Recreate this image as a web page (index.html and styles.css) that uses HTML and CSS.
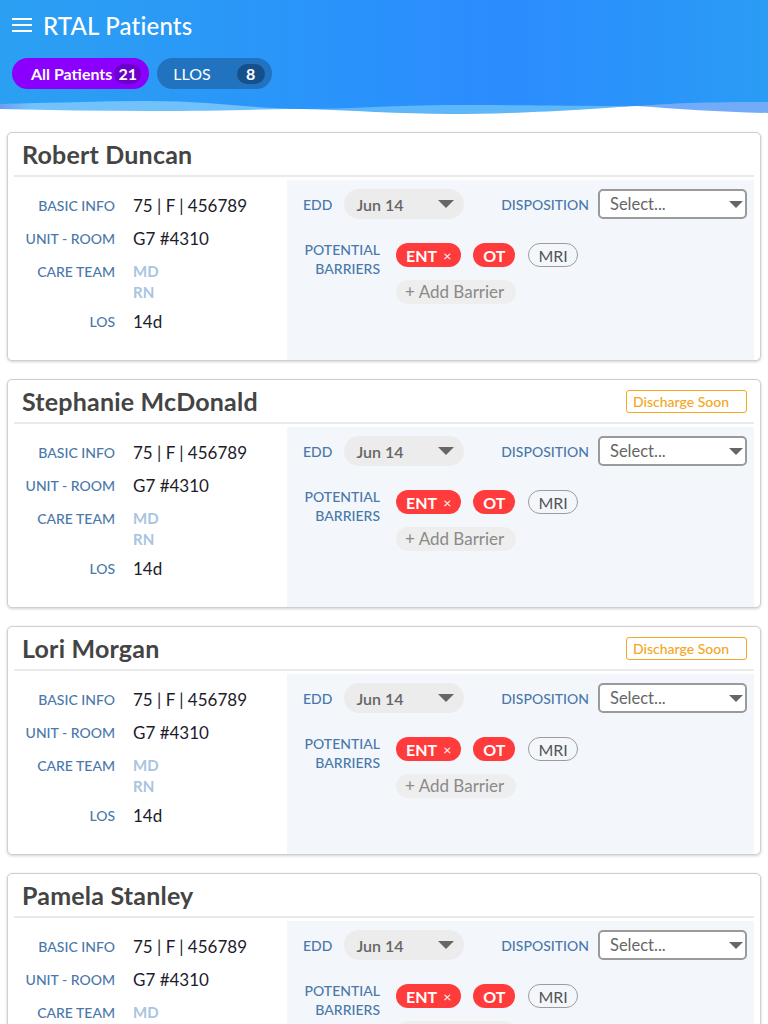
FILE: index.html
```html
<!DOCTYPE html>
<html>
<head>
<meta charset="utf-8">
<link rel="stylesheet" href="styles.css">
</head>
<body>
<header class="topbar">
  <div class="titlebar">
    <svg class="menu" width="20" height="14" viewBox="0 0 20 14"><rect x="0" y="0" width="20" height="2" fill="#fff"/><rect x="0" y="6" width="20" height="2" fill="#fff"/><rect x="0" y="12" width="20" height="2" fill="#fff"/></svg>
    <h1 class="title">RTAL Patients</h1>
  </div>
  <div class="filters">
    <div class="chip chip-active">All Patients<span class="count">21</span></div>
    <div class="chip chip-llos">LLOS<span class="count">8</span></div>
  </div>
  <svg class="wave" viewBox="0 0 768 20" preserveAspectRatio="none">
    <defs>
      <linearGradient id="wg" x1="0" y1="0" x2="1" y2="0">
        <stop offset="0" stop-color="#6a9ef8"/>
        <stop offset="0.04" stop-color="#72c3fb"/>
        <stop offset="0.39" stop-color="#6fc0fb"/>
        <stop offset="0.40" stop-color="#5db7f9"/>
        <stop offset="0.82" stop-color="#5db7f9"/>
        <stop offset="0.83" stop-color="#72abf8"/>
        <stop offset="1" stop-color="#72abf8"/>
      </linearGradient>
    </defs>
    <path d="M0 8 C 50 7, 100 5, 150 5 C 210 5, 260 13, 300 13 C 350 13, 400 9, 450 9 C 530 9, 600 10, 637 10 C 665 8, 690 6, 768 6 L768 20 L0 20 Z" fill="url(#wg)"/>
    <path d="M0 13 C 50 14, 100 15, 150 15 C 220 15, 270 13, 300 13 C 350 14, 400 18, 450 18 C 530 18, 600 12, 637 10 C 680 13, 720 16, 768 17 L768 20 L0 20 Z" fill="#fff"/>
  </svg>
</header>

<main class="list">
  <section class="card">
    <div class="card-head"><h2 class="name">Robert Duncan</h2></div>
    <div class="card-body">
      <div class="info">
        <div class="lbl">Basic Info</div><div class="val">75 | F | 456789</div>
        <div class="lbl">Unit - Room</div><div class="val">G7 #4310</div>
        <div class="lbl">Care Team</div><div class="val team"><div>MD</div><div>RN</div></div>
        <div class="lbl los">LOS</div><div class="val los">14d</div>
      </div>
      <div class="plan">
        <div class="plan-row">
          <div class="field"><span class="plbl">EDD</span><div class="pill">Jun 14<svg class="caret" width="16" height="8" viewBox="0 0 16 8"><path d="M0 0 H16 L8 8 Z" fill="#666"/></svg></div></div>
          <div class="field"><span class="plbl">Disposition</span><div class="select">Select...<svg class="caret" width="14" height="7" viewBox="0 0 14 7"><path d="M0 0 H14 L7 7 Z" fill="#666"/></svg></div></div>
        </div>
        <div class="barriers">
          <div class="plbl blbl">Potential<br>Barriers</div>
          <div class="tags">
            <div class="tagline"><span class="tag red">ENT<span class="x">×</span></span><span class="tag red">OT</span><span class="tag outline">MRI</span></div>
            <span class="add">+ Add Barrier</span>
          </div>
        </div>
      </div>
    </div>
  </section>

  <section class="card">
    <div class="card-head"><h2 class="name">Stephanie McDonald</h2><span class="badge">Discharge Soon</span></div>
    <div class="card-body">
      <div class="info">
        <div class="lbl">Basic Info</div><div class="val">75 | F | 456789</div>
        <div class="lbl">Unit - Room</div><div class="val">G7 #4310</div>
        <div class="lbl">Care Team</div><div class="val team"><div>MD</div><div>RN</div></div>
        <div class="lbl los">LOS</div><div class="val los">14d</div>
      </div>
      <div class="plan">
        <div class="plan-row">
          <div class="field"><span class="plbl">EDD</span><div class="pill">Jun 14<svg class="caret" width="16" height="8" viewBox="0 0 16 8"><path d="M0 0 H16 L8 8 Z" fill="#666"/></svg></div></div>
          <div class="field"><span class="plbl">Disposition</span><div class="select">Select...<svg class="caret" width="14" height="7" viewBox="0 0 14 7"><path d="M0 0 H14 L7 7 Z" fill="#666"/></svg></div></div>
        </div>
        <div class="barriers">
          <div class="plbl blbl">Potential<br>Barriers</div>
          <div class="tags">
            <div class="tagline"><span class="tag red">ENT<span class="x">×</span></span><span class="tag red">OT</span><span class="tag outline">MRI</span></div>
            <span class="add">+ Add Barrier</span>
          </div>
        </div>
      </div>
    </div>
  </section>

  <section class="card">
    <div class="card-head"><h2 class="name">Lori Morgan</h2><span class="badge">Discharge Soon</span></div>
    <div class="card-body">
      <div class="info">
        <div class="lbl">Basic Info</div><div class="val">75 | F | 456789</div>
        <div class="lbl">Unit - Room</div><div class="val">G7 #4310</div>
        <div class="lbl">Care Team</div><div class="val team"><div>MD</div><div>RN</div></div>
        <div class="lbl los">LOS</div><div class="val los">14d</div>
      </div>
      <div class="plan">
        <div class="plan-row">
          <div class="field"><span class="plbl">EDD</span><div class="pill">Jun 14<svg class="caret" width="16" height="8" viewBox="0 0 16 8"><path d="M0 0 H16 L8 8 Z" fill="#666"/></svg></div></div>
          <div class="field"><span class="plbl">Disposition</span><div class="select">Select...<svg class="caret" width="14" height="7" viewBox="0 0 14 7"><path d="M0 0 H14 L7 7 Z" fill="#666"/></svg></div></div>
        </div>
        <div class="barriers">
          <div class="plbl blbl">Potential<br>Barriers</div>
          <div class="tags">
            <div class="tagline"><span class="tag red">ENT<span class="x">×</span></span><span class="tag red">OT</span><span class="tag outline">MRI</span></div>
            <span class="add">+ Add Barrier</span>
          </div>
        </div>
      </div>
    </div>
  </section>

  <section class="card">
    <div class="card-head"><h2 class="name">Pamela Stanley</h2></div>
    <div class="card-body">
      <div class="info">
        <div class="lbl">Basic Info</div><div class="val">75 | F | 456789</div>
        <div class="lbl">Unit - Room</div><div class="val">G7 #4310</div>
        <div class="lbl">Care Team</div><div class="val team"><div>MD</div><div>RN</div></div>
        <div class="lbl los">LOS</div><div class="val los">14d</div>
      </div>
      <div class="plan">
        <div class="plan-row">
          <div class="field"><span class="plbl">EDD</span><div class="pill">Jun 14<svg class="caret" width="16" height="8" viewBox="0 0 16 8"><path d="M0 0 H16 L8 8 Z" fill="#666"/></svg></div></div>
          <div class="field"><span class="plbl">Disposition</span><div class="select">Select...<svg class="caret" width="14" height="7" viewBox="0 0 14 7"><path d="M0 0 H14 L7 7 Z" fill="#666"/></svg></div></div>
        </div>
        <div class="barriers">
          <div class="plbl blbl">Potential<br>Barriers</div>
          <div class="tags">
            <div class="tagline"><span class="tag red">ENT<span class="x">×</span></span><span class="tag red">OT</span><span class="tag outline">MRI</span></div>
            <span class="add">+ Add Barrier</span>
          </div>
        </div>
      </div>
    </div>
  </section>
</main>
</body>
</html>
```

FILE: styles.css
```css
* { box-sizing: border-box; }
html, body { margin: 0; padding: 0; }
body {
  font-family: Lato, "Open Sans", "Liberation Sans", sans-serif;
  background: #fff;
  color: #222;
  width: 768px;
  height: 1024px;
  overflow: hidden;
}

.topbar {
  position: relative;
  height: 116px;
  background: linear-gradient(90deg, #2ba0f2 0%, #2a93fb 45%, #2b8cfe 65%, #2a97f8 90%, #2a9cf5 100%);
  padding: 12px 12px 0;
}
.titlebar {
  display: flex;
  align-items: center;
  height: 26px;
}
.menu { display: block; margin-right: 11px; }
.title {
  margin: 0;
  font-size: 24px;
  font-weight: 500;
  color: #fff;
  letter-spacing: 0.2px;
}
.filters {
  display: flex;
  gap: 8px;
  margin-top: 20px;
}
.chip {
  display: flex;
  align-items: center;
  height: 31px;
  border-radius: 16px;
  color: #fff;
  font-size: 16px;
}
.chip-active {
  background: #8b00fd;
  font-weight: 700;
  padding: 0 8px 0 19px;
}
.chip-active .count {
  background: #6c00c9;
  margin-left: 2px;
  width: 27px;
}
.chip-llos {
  background: #2173c0;
  padding: 0 7px 0 16px;
}
.chip-llos .count {
  background: #16508b;
  margin-left: 26px;
  width: 28px;
  font-weight: 700;
}
.count {
  height: 20px;
  line-height: 20px;
  border-radius: 10px;
  text-align: center;
  font-size: 16px;
}
.wave {
  position: absolute;
  left: 0;
  bottom: 0;
  width: 768px;
  height: 20px;
  display: block;
}

.list {
  padding: 16px 7px 20px;
  display: flex;
  flex-direction: column;
  gap: 18px;
}
.card {
  border: 1px solid #cfcfcf;
  border-radius: 5px;
  box-shadow: 0 1px 3px rgba(0,0,0,0.18);
  background: #fff;
  padding: 0 6px;
}
.card-head {
  display: flex;
  align-items: center;
  justify-content: space-between;
  height: 44px;
  padding: 0 7px 0 8px;
  border-bottom: 2px solid #e9e9e9;
}
.name {
  margin: 0;
  font-size: 25px;
  font-weight: 700;
  color: #444;
  letter-spacing: 0.2px;
}
.badge {
  border: 1px solid #f5a623;
  color: #f5a623;
  border-radius: 3px;
  font-size: 14px;
  font-weight: 500;
  height: 23px;
  line-height: 21px;
  padding: 0 0 0 6px;
  width: 121px;
}
.card-body {
  display: flex;
  height: 180px;
  margin-top: 3px;
}
.info {
  width: 273px;
  display: grid;
  grid-template-columns: 101px 1fr;
  column-gap: 18px;
  row-gap: 13px;
  padding-top: 16px;
  align-content: start;
}
.lbl {
  text-align: right;
  text-transform: uppercase;
  font-size: 14px;
  font-weight: 500;
  line-height: 20px;
  color: #4a78aa;
}
.val {
  font-size: 17px;
  line-height: 20px;
  color: #1c1c2c;
}
.team {
  color: #a9c4e0;
  font-weight: 700;
  font-size: 15px;
  line-height: 21px;
  margin-top: -1px;
}
.los { margin-top: -4px; }

.plan {
  flex: 1;
  background: #f3f7fc;
  padding: 9px 7px 0 16px;
}
.plan-row {
  display: flex;
  justify-content: space-between;
  align-items: center;
}
.field {
  display: flex;
  align-items: center;
}
.plbl {
  text-transform: uppercase;
  font-size: 14px;
  font-weight: 500;
  color: #4a78aa;
  line-height: 19px;
}
.field .plbl { margin-right: 12px; }
.pill {
  display: flex;
  align-items: center;
  justify-content: space-between;
  width: 120px;
  height: 30px;
  border-radius: 15px;
  background: #ececec;
  color: #666;
  font-size: 16px;
  font-weight: 600;
  padding: 0 10px 0 12px;
}
.select {
  display: flex;
  align-items: center;
  justify-content: space-between;
  width: 149px;
  height: 30px;
  border: 2px solid #9a9a9a;
  border-radius: 5px;
  background: #fff;
  color: #666;
  font-size: 16.5px;
  padding: 0 2px 0 10px;
  margin-left: -3px;
}
.caret { display: block; }
.barriers {
  display: flex;
  margin-top: 24px;
}
.blbl {
  width: 77px;
  text-align: right;
  margin-top: -3px;
}
.tags {
  margin-left: 16px;
  display: flex;
  flex-direction: column;
  align-items: flex-start;
  gap: 13px;
}
.tagline {
  display: flex;
  gap: 12px;
}
.tag {
  display: inline-flex;
  align-items: center;
  height: 24px;
  border-radius: 12px;
  font-size: 16px;
  padding: 0 10px;
}
.tag.red {
  background: #ff3b3b;
  color: #fff;
  font-weight: 700;
}
.tag .x {
  font-weight: 400;
  font-size: 14px;
  margin-left: 6px;
}
.tag.outline {
  border: 1px solid #9c9c9c;
  color: #555;
  padding: 0 9px;
  margin-left: 1px;
}
.add {
  display: inline-block;
  height: 24px;
  line-height: 24px;
  border-radius: 12px;
  background: #eeeeee;
  color: #8a8a8a;
  font-size: 17px;
  padding: 0 9px;
  width: 120px;
  white-space: nowrap;
}
```
